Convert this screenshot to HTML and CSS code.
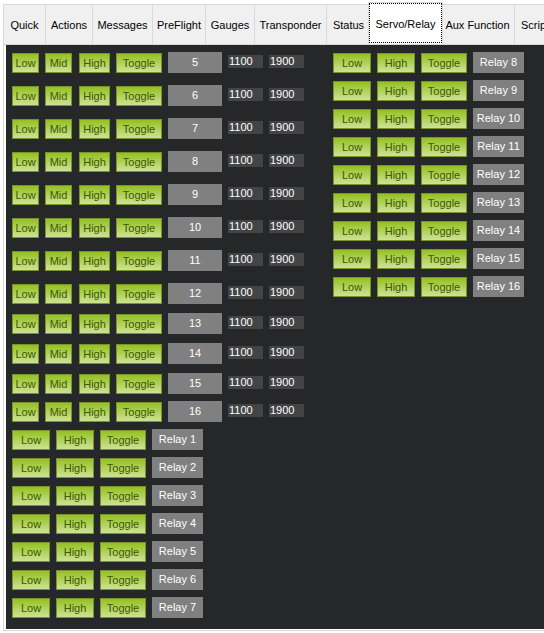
FILE: index.html
```html
<!DOCTYPE html>
<html>
<head>
<meta charset="utf-8">
<link rel="stylesheet" href="styles.css">
</head>
<body>
<div class="tabs">
  <div class="tab w-quick">Quick</div>
  <div class="tab w-actions">Actions</div>
  <div class="tab w-messages">Messages</div>
  <div class="tab w-preflight">PreFlight</div>
  <div class="tab w-gauges">Gauges</div>
  <div class="tab w-transponder">Transponder</div>
  <div class="tab w-status">Status</div>
  <div class="tab w-servo active">Servo/Relay</div>
  <div class="tab w-aux">Aux Function</div>
  <div class="tab w-script">Scripts</div>
</div>
<div class="page">
  <div class="content">
    <div class="col left">
      <div class="srow"><span class="btn s-low">Low</span><span class="btn s-mid">Mid</span><span class="btn s-high">High</span><span class="btn toggle">Toggle</span><span class="num">5</span><span class="val">1100</span><span class="val">1900</span></div>
      <div class="srow"><span class="btn s-low">Low</span><span class="btn s-mid">Mid</span><span class="btn s-high">High</span><span class="btn toggle">Toggle</span><span class="num">6</span><span class="val">1100</span><span class="val">1900</span></div>
      <div class="srow"><span class="btn s-low">Low</span><span class="btn s-mid">Mid</span><span class="btn s-high">High</span><span class="btn toggle">Toggle</span><span class="num">7</span><span class="val">1100</span><span class="val">1900</span></div>
      <div class="srow"><span class="btn s-low">Low</span><span class="btn s-mid">Mid</span><span class="btn s-high">High</span><span class="btn toggle">Toggle</span><span class="num">8</span><span class="val">1100</span><span class="val">1900</span></div>
      <div class="srow"><span class="btn s-low">Low</span><span class="btn s-mid">Mid</span><span class="btn s-high">High</span><span class="btn toggle">Toggle</span><span class="num">9</span><span class="val">1100</span><span class="val">1900</span></div>
      <div class="srow"><span class="btn s-low">Low</span><span class="btn s-mid">Mid</span><span class="btn s-high">High</span><span class="btn toggle">Toggle</span><span class="num">10</span><span class="val">1100</span><span class="val">1900</span></div>
      <div class="srow"><span class="btn s-low">Low</span><span class="btn s-mid">Mid</span><span class="btn s-high">High</span><span class="btn toggle">Toggle</span><span class="num">11</span><span class="val">1100</span><span class="val">1900</span></div>
      <div class="srow m9"><span class="btn s-low">Low</span><span class="btn s-mid">Mid</span><span class="btn s-high">High</span><span class="btn toggle">Toggle</span><span class="num">12</span><span class="val">1100</span><span class="val">1900</span></div>
      <div class="srow m9"><span class="btn s-low">Low</span><span class="btn s-mid">Mid</span><span class="btn s-high">High</span><span class="btn toggle">Toggle</span><span class="num">13</span><span class="val">1100</span><span class="val">1900</span></div>
      <div class="srow m9"><span class="btn s-low">Low</span><span class="btn s-mid">Mid</span><span class="btn s-high">High</span><span class="btn toggle">Toggle</span><span class="num">14</span><span class="val">1100</span><span class="val">1900</span></div>
      <div class="srow m7"><span class="btn s-low">Low</span><span class="btn s-mid">Mid</span><span class="btn s-high">High</span><span class="btn toggle">Toggle</span><span class="num">15</span><span class="val">1100</span><span class="val">1900</span></div>
      <div class="srow m7"><span class="btn s-low">Low</span><span class="btn s-mid">Mid</span><span class="btn s-high">High</span><span class="btn toggle">Toggle</span><span class="num">16</span><span class="val">1100</span><span class="val">1900</span></div>
      <div class="rrow"><span class="btn r-btn">Low</span><span class="btn r-btn">High</span><span class="btn toggle">Toggle</span><span class="relay">Relay 1</span></div>
      <div class="rrow"><span class="btn r-btn">Low</span><span class="btn r-btn">High</span><span class="btn toggle">Toggle</span><span class="relay">Relay 2</span></div>
      <div class="rrow"><span class="btn r-btn">Low</span><span class="btn r-btn">High</span><span class="btn toggle">Toggle</span><span class="relay">Relay 3</span></div>
      <div class="rrow"><span class="btn r-btn">Low</span><span class="btn r-btn">High</span><span class="btn toggle">Toggle</span><span class="relay">Relay 4</span></div>
      <div class="rrow"><span class="btn r-btn">Low</span><span class="btn r-btn">High</span><span class="btn toggle">Toggle</span><span class="relay">Relay 5</span></div>
      <div class="rrow"><span class="btn r-btn">Low</span><span class="btn r-btn">High</span><span class="btn toggle">Toggle</span><span class="relay">Relay 6</span></div>
      <div class="rrow"><span class="btn r-btn">Low</span><span class="btn r-btn">High</span><span class="btn toggle">Toggle</span><span class="relay">Relay 7</span></div>
    </div>
    <div class="col right">
      <div class="rrow"><span class="btn r-btn">Low</span><span class="btn r-btn">High</span><span class="btn toggle">Toggle</span><span class="relay">Relay 8</span></div>
      <div class="rrow"><span class="btn r-btn">Low</span><span class="btn r-btn">High</span><span class="btn toggle">Toggle</span><span class="relay">Relay 9</span></div>
      <div class="rrow"><span class="btn r-btn">Low</span><span class="btn r-btn">High</span><span class="btn toggle">Toggle</span><span class="relay">Relay 10</span></div>
      <div class="rrow"><span class="btn r-btn">Low</span><span class="btn r-btn">High</span><span class="btn toggle">Toggle</span><span class="relay">Relay 11</span></div>
      <div class="rrow"><span class="btn r-btn">Low</span><span class="btn r-btn">High</span><span class="btn toggle">Toggle</span><span class="relay">Relay 12</span></div>
      <div class="rrow"><span class="btn r-btn">Low</span><span class="btn r-btn">High</span><span class="btn toggle">Toggle</span><span class="relay">Relay 13</span></div>
      <div class="rrow"><span class="btn r-btn">Low</span><span class="btn r-btn">High</span><span class="btn toggle">Toggle</span><span class="relay">Relay 14</span></div>
      <div class="rrow"><span class="btn r-btn">Low</span><span class="btn r-btn">High</span><span class="btn toggle">Toggle</span><span class="relay">Relay 15</span></div>
      <div class="rrow"><span class="btn r-btn">Low</span><span class="btn r-btn">High</span><span class="btn toggle">Toggle</span><span class="relay">Relay 16</span></div>
    </div>
  </div>
</div>
</body>
</html>
```
FILE: styles.css
```css
* { box-sizing: border-box; }
html, body {
  margin: 0;
  padding: 0;
  width: 544px;
  height: 633px;
  overflow: hidden;
  background: #ffffff;
  font-family: "Liberation Sans", Arial, sans-serif;
  font-size: 11px;
}

.tabs {
  display: flex;
  align-items: flex-end;
  height: 44px;
  padding-left: 3px;
  overflow: hidden;
  white-space: nowrap;
}
.tab {
  flex: none;
  height: 40px;
  margin-left: -1px;
  border: 1px solid #d9d9d9;
  border-bottom: none;
  background: #f0f0f0;
  color: #000;
  display: flex;
  align-items: center;
  justify-content: center;
}
.tab:first-child { margin-left: 0; }
.tab.active {
  position: relative;
  z-index: 1;
  height: 42px;
  margin-left: -3px;
  margin-right: -2px;
  background: #ffffff;
  outline: 1px dotted #000;
  outline-offset: -2px;
}
.w-quick { width: 43px; }
.w-actions { width: 48px; }
.w-messages { width: 61px; }
.w-preflight { width: 54px; }
.w-gauges { width: 50px; }
.w-transponder { width: 73px; }
.w-status { width: 45px; }
.w-servo { width: 75px; }
.w-aux { width: 75px; }
.w-script { width: 50px; justify-content: flex-start; padding-left: 6px; }

.page {
  margin-left: 3px;
  width: 545px;
  height: 587px;
  border: 1px solid #d9d9d9;
  padding: 0 0 1px 2px;
  background: #ffffff;
}
.content {
  height: 100%;
  background: #262728;
  padding: 7px 0 0 6px;
  display: flex;
  align-items: flex-start;
}
.col { display: flex; flex-direction: column; }
.col.left { width: 321px; }

.srow, .rrow {
  display: flex;
  align-items: flex-start;
  height: 21px;
  gap: 6px;
}
.srow { margin-bottom: 12px; }
.srow.m9 { margin-bottom: 9px; }
.srow.m7 { margin-bottom: 7px; }
.rrow { margin-bottom: 7px; }

.btn {
  flex: none;
  margin-top: 1px;
  height: 20px;
  border: 1px solid #799429;
  background: linear-gradient(to bottom, #94c11f, #cde296);
  color: #405704;
  text-align: center;
  line-height: 18px;
}
.s-low, .s-mid { width: 27px; }
.s-high { width: 31px; margin-left: 1px; }
.toggle { width: 46px; }
.r-btn { width: 38px; }

.num {
  flex: none;
  width: 54px;
  height: 21px;
  background: #808080;
  color: #fff;
  text-align: center;
  line-height: 21px;
}
.val {
  flex: none;
  width: 35px;
  height: 13px;
  margin-top: 3px;
  background: #434445;
  color: #fff;
  line-height: 13px;
  padding-left: 1px;
}
.relay {
  flex: none;
  width: 51px;
  height: 21px;
  background: #808080;
  color: #fff;
  text-align: center;
  line-height: 20px;
  white-space: nowrap;
}
```
